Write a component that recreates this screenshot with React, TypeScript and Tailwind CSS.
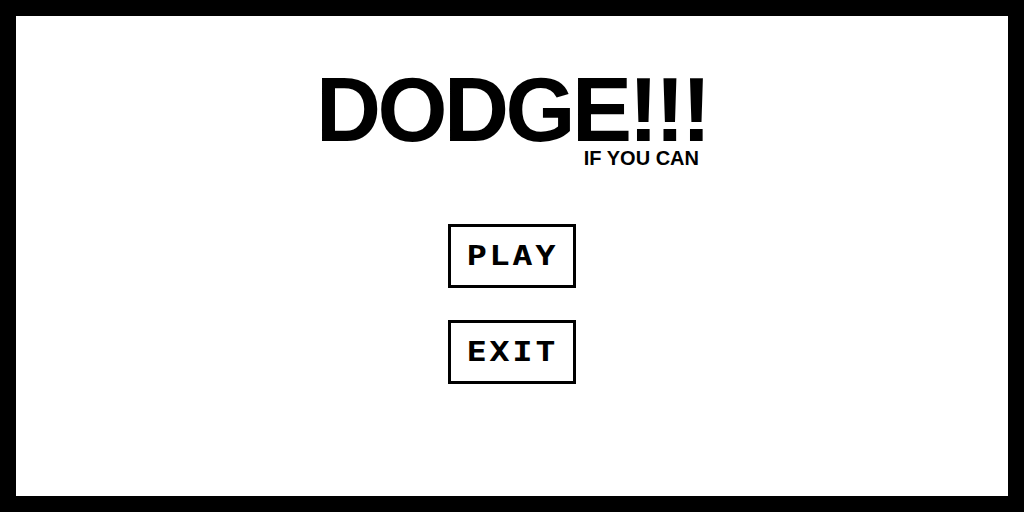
const MenuButton = ({ label }: { label: string }) => (
  <button className="w-[128px] h-[64px] border-[3px] border-black bg-white flex items-center justify-center">
    <span className="inline-block text-black font-['DejaVu_Sans_Mono',monospace] font-bold text-[26px] leading-none tracking-[2px] scale-x-[1.3]">
      {label}
    </span>
  </button>
);

export default function App() {
  return (
    <div className="w-full h-[512px] border-[16px] border-black bg-white flex flex-col items-center font-['Liberation_Sans',Arial,sans-serif]">
      <div className="mt-[58px] flex flex-col items-end">
        <h1 className="text-[90px] leading-[0.82] font-bold tracking-[-3.5px] text-black">
          DODGE!!!
        </h1>
        <p className="mr-[9px] text-[20px] leading-none font-bold text-black">
          IF YOU CAN
        </p>
      </div>
      <div className="mt-[56px] flex flex-col gap-[32px]">
        <MenuButton label="PLAY" />
        <MenuButton label="EXIT" />
      </div>
    </div>
  );
}
